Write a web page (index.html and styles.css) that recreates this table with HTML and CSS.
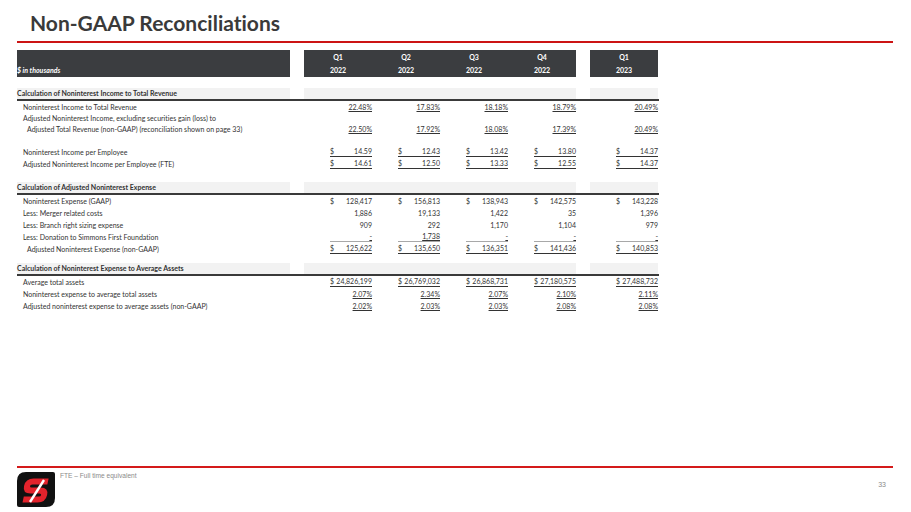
FILE: index.html
```html
<!DOCTYPE html>
<html>
<head>
<meta charset="utf-8">
<link rel="stylesheet" href="styles.css">
</head>
<body>
<div class="slide">
  <h1 class="title">Non-GAAP Reconciliations</h1>
  <div class="rule"></div>

  <div class="table">
    <div class="row head">
      <div class="lab">$ in thousands</div><div class="gap"></div>
      <div class="hc">Q1<br>2022</div><div class="hc">Q2<br>2022</div><div class="hc">Q3<br>2022</div><div class="hc">Q4<br>2022</div>
      <div class="gap"></div><div class="hc">Q1<br>2023</div>
    </div>

    <div class="row sec s1">
      <div class="lab">Calculation of Noninterest Income to Total Revenue</div><div class="gap"></div>
      <div class="band"></div><div class="band"></div><div class="band"></div><div class="band"></div>
      <div class="gap"></div><div class="band"></div>
    </div>
    <div class="row">
      <div class="lab in1">Noninterest Income to Total Revenue</div><div class="gap"></div>
      <div class="num"><u>22.48%</u></div><div class="num"><u>17.83%</u></div><div class="num"><u>18.18%</u></div><div class="num"><u>18.79%</u></div>
      <div class="gap"></div><div class="num"><u>20.49%</u></div>
    </div>
    <div class="row dbl">
      <div class="lab in1">Adjusted Noninterest Income, excluding securities gain (loss) to<br><span class="in2">Adjusted Total Revenue (non-GAAP) (reconciliation shown on page 33)</span></div><div class="gap"></div>
      <div class="num"><u>22.50%</u></div><div class="num"><u>17.92%</u></div><div class="num"><u>18.08%</u></div><div class="num"><u>17.39%</u></div>
      <div class="gap"></div><div class="num"><u>20.49%</u></div>
    </div>
    <div class="spacer sp11"></div>
    <div class="row">
      <div class="lab in1">Noninterest Income per Employee</div><div class="gap"></div>
      <div class="cur ul"><span>$</span><span>14.59</span></div><div class="cur ul"><span>$</span><span>12.43</span></div><div class="cur ul"><span>$</span><span>13.42</span></div><div class="cur ul"><span>$</span><span>13.80</span></div>
      <div class="gap"></div><div class="cur ul"><span>$</span><span>14.37</span></div>
    </div>
    <div class="row">
      <div class="lab in1">Adjusted Noninterest Income per Employee (FTE)</div><div class="gap"></div>
      <div class="cur ul"><span>$</span><span>14.61</span></div><div class="cur ul"><span>$</span><span>12.50</span></div><div class="cur ul"><span>$</span><span>13.33</span></div><div class="cur ul"><span>$</span><span>12.55</span></div>
      <div class="gap"></div><div class="cur ul"><span>$</span><span>14.37</span></div>
    </div>
    <div class="spacer sp12"></div>

    <div class="row sec">
      <div class="lab">Calculation of Adjusted Noninterest Expense</div><div class="gap"></div>
      <div class="band"></div><div class="band"></div><div class="band"></div><div class="band"></div>
      <div class="gap"></div><div class="band"></div>
    </div>
    <div class="row">
      <div class="lab in1">Noninterest Expense (GAAP)</div><div class="gap"></div>
      <div class="cur"><span>$</span><span>128,417</span></div><div class="cur"><span>$</span><span>156,813</span></div><div class="cur"><span>$</span><span>138,943</span></div><div class="cur"><span>$</span><span>142,575</span></div>
      <div class="gap"></div><div class="cur"><span>$</span><span>143,228</span></div>
    </div>
    <div class="row">
      <div class="lab in1">Less: Merger related costs</div><div class="gap"></div>
      <div class="num">1,886</div><div class="num">19,133</div><div class="num">1,422</div><div class="num">35</div>
      <div class="gap"></div><div class="num">1,396</div>
    </div>
    <div class="row">
      <div class="lab in1">Less: Branch right sizing expense</div><div class="gap"></div>
      <div class="num">909</div><div class="num">292</div><div class="num">1,170</div><div class="num">1,104</div>
      <div class="gap"></div><div class="num">979</div>
    </div>
    <div class="row">
      <div class="lab in1">Less: Donation to Simmons First Foundation</div><div class="gap"></div>
      <div class="cur gl"><span></span><u>-</u></div><div class="cur gl"><span></span><u>1,738</u></div><div class="cur gl"><span></span><u>-</u></div><div class="cur gl"><span></span><u>-</u></div>
      <div class="gap"></div><div class="cur gl"><span></span><u>-</u></div>
    </div>
    <div class="row">
      <div class="lab in2b">Adjusted Noninterest Expense (non-GAAP)</div><div class="gap"></div>
      <div class="cur ul"><span>$</span><span>125,622</span></div><div class="cur ul"><span>$</span><span>135,650</span></div><div class="cur ul"><span>$</span><span>136,351</span></div><div class="cur ul"><span>$</span><span>141,436</span></div>
      <div class="gap"></div><div class="cur ul"><span>$</span><span>140,853</span></div>
    </div>
    <div class="spacer sp8"></div>

    <div class="row sec">
      <div class="lab">Calculation of Noninterest Expense to Average Assets</div><div class="gap"></div>
      <div class="band"></div><div class="band"></div><div class="band"></div><div class="band"></div>
      <div class="gap"></div><div class="band"></div>
    </div>
    <div class="row">
      <div class="lab in1">Average total assets</div><div class="gap"></div>
      <div class="cur ul"><span>$</span><span>24,826,199</span></div><div class="cur ul"><span>$</span><span>26,769,032</span></div><div class="cur ul"><span>$</span><span>26,868,731</span></div><div class="cur ul"><span>$</span><span>27,180,575</span></div>
      <div class="gap"></div><div class="cur ul"><span>$</span><span>27,488,732</span></div>
    </div>
    <div class="row">
      <div class="lab in1">Noninterest expense to average total assets</div><div class="gap"></div>
      <div class="num"><u>2.07%</u></div><div class="num"><u>2.34%</u></div><div class="num"><u>2.07%</u></div><div class="num"><u>2.10%</u></div>
      <div class="gap"></div><div class="num"><u>2.11%</u></div>
    </div>
    <div class="row">
      <div class="lab in1">Adjusted noninterest expense to average assets (non-GAAP)</div><div class="gap"></div>
      <div class="num"><u>2.02%</u></div><div class="num"><u>2.03%</u></div><div class="num"><u>2.03%</u></div><div class="num"><u>2.08%</u></div>
      <div class="gap"></div><div class="num"><u>2.08%</u></div>
    </div>
  </div>

  <div class="footer">
    <div class="footer-rule"></div>
    <div class="footer-body">
      <svg class="logo" width="38" height="35" viewBox="0 0 38 35">
        <path d="M9 0 H36 Q38 0 38 2 V26 Q38 35 29 35 H2 Q0 35 0 33 V9 Q0 0 9 0 Z" fill="#111"/>
        <g transform="translate(3 0) skewX(-12)">
          <path d="M30 9.5 H15 Q10 9.5 10 14 Q10 18.5 15 18.5 H24 Q29 18.5 29 23 Q29 27.5 24 27.5 H9" stroke="#e3232c" stroke-width="6" fill="none"/>
        </g>
        <path d="M13 30 L27 8" stroke="#fff" stroke-width="2.4"/>
      </svg>
      <div class="note">FTE – Full time equivalent</div>
      <div class="page">33</div>
    </div>
  </div>
</div>
</body>
</html>
```

FILE: styles.css
```css
* { box-sizing: border-box; }
html, body { margin: 0; padding: 0; background: #fff; }
.slide {
  width: 911px;
  height: 512px;
  display: flex;
  flex-direction: column;
  overflow: hidden;
  font-family: Lato, "Open Sans", sans-serif;
  font-variant-ligatures: none;
  color: #333;
}
.title {
  margin: 0;
  padding: 10px 0 0 30px;
  font-size: 21px;
  line-height: 26px;
  font-weight: 700;
  color: #3a3a3a;
}
.rule {
  margin: 5px 18px 0 17px;
  height: 2px;
  background: #cc1414;
}
.table {
  margin: 7px 0 0 17px;
  width: 642px;
  font-size: 7px;
  color: #333;
}
.row {
  display: grid;
  grid-template-columns: 273px 14px 68px 68px 68px 68px 14px 68px;
  height: 12px;
  line-height: 12px;
  white-space: nowrap;
}
.head {
  height: 26px;
  color: #fff;
  font-weight: 700;
}
.head .lab {
  background: #3b3d40;
  font-style: italic;
  display: flex;
  align-items: flex-end;
  line-height: 13px;
}
.head .hc {
  background: #3b3d40;
  text-align: center;
  line-height: 13px;
  padding-top: 1px;
}
.sec {
  height: 13px;
  border-bottom: 2px solid #3a3a3a;
  line-height: 11px;
  font-weight: 700;
}
.sec .lab, .sec .band { background: #f2f2f2; }
.s1 { margin-top: 12px; }
.in1 { padding-left: 6px; }
.in2 { padding-left: 4px; }
.in2b { padding-left: 10px; }
.num { text-align: right; }
.num u, .cur u { text-decoration: underline; text-underline-offset: 1px; }
.cur {
  display: flex;
  justify-content: space-between;
  margin-left: 26px;
}
.ul { align-items: flex-start; }
.ul span { border-bottom: 1px solid #333; line-height: 10px; height: 11px; }
.ul span:first-child { flex: 1; }
.ul span:last-child { padding-left: 2px; }
.gl { border-bottom: 1px solid #a8a8a8; height: 11px; line-height: 11px; }
.dbl { height: 22px; line-height: 11px; }
.dbl .num { align-self: end; }
.spacer { width: 1px; }
.sp11 { height: 11px; }
.sp12 { height: 12px; }
.sp8 { height: 8px; }
.footer {
  margin-top: auto;
  padding: 0 18px 5px 17px;
}
.footer-rule {
  height: 2px;
  background: #d41a1a;
}
.footer-body {
  display: flex;
  align-items: flex-start;
  margin-top: 4px;
}
.logo { display: block; flex: none; }
.note {
  margin-left: 5px;
  font-family: "Liberation Sans", Arial, sans-serif;
  font-size: 6.6px;
  line-height: 8px;
  color: #8a8a8a;
}
.page {
  margin-left: auto;
  margin-right: 7px;
  margin-top: 9px;
  font-family: "Liberation Sans", Arial, sans-serif;
  font-size: 7px;
  color: #8a8a8a;
}
```
